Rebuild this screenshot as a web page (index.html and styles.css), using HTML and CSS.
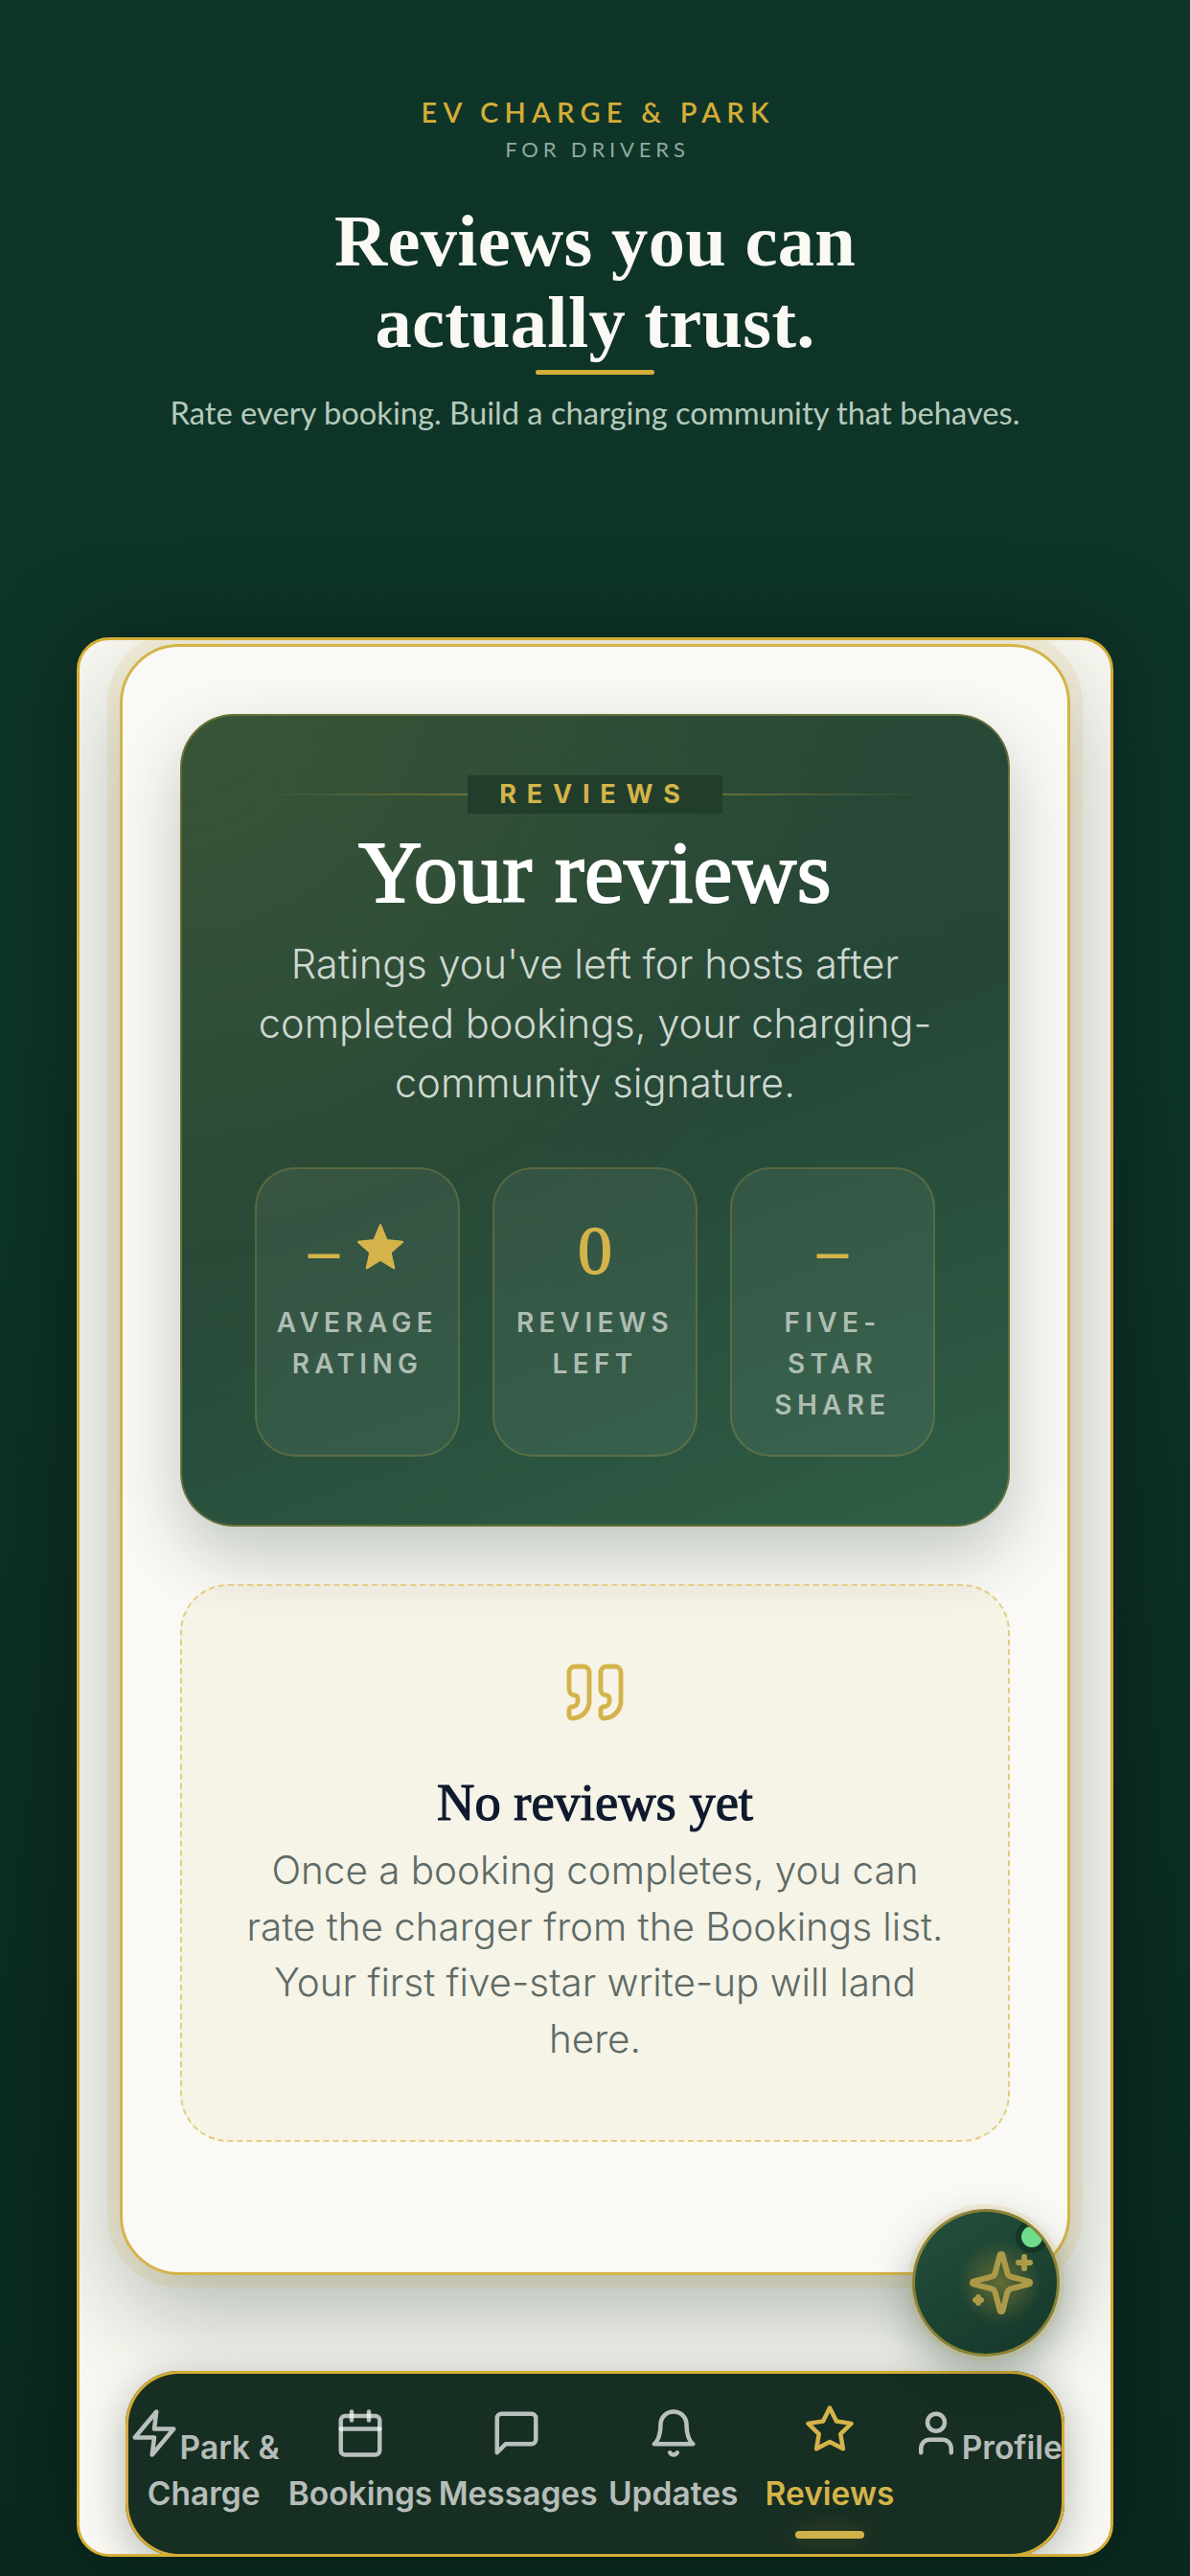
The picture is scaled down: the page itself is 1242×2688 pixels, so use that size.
FILE: index.html
```html
<!DOCTYPE html>
<html lang="en">
    <head>
        <meta charset="UTF-8" />
        <meta name="viewport" content="width=device-width, initial-scale=1.0" />
        <title>Reviews</title>
        <link rel="stylesheet" href="styles.css">
    </head>
    <body>
        <header class="intro">
            <div class="brand">EV CHARGE &amp; PARK</div>
            <div class="audience">FOR DRIVERS</div>
            <h1 class="headline">Reviews you can<br>actually trust.</h1>
            <div class="headline-rule"></div>
            <p class="tagline">Rate every booking. Build a charging community that behaves.</p>
        </header>
        <main class="phone">
            <section class="screen">
                <div class="hero">
                    <div class="eyebrow">
                        <span class="eyebrow-line"></span>
                        <span class="eyebrow-text">REVIEWS</span>
                        <span class="eyebrow-line flip"></span>
                    </div>
                    <h2 class="hero-title">Your reviews</h2>
                    <p class="hero-text">Ratings you've left for hosts after completed bookings, your charging-community signature.</p>
                    <div class="stats">
                        <div class="stat">
                            <div class="stat-value"><span class="stat-dash">–</span><svg class="stat-star" viewBox="0 0 24 24"><path d="M12 2.4l2.9 7 7.3.8-5.5 4.9 1.6 7.2-6.3-3.8-6.3 3.8 1.6-7.2-5.5-4.9 7.3-.8z" /></svg></div>
                            <div class="stat-label">AVERAGE RATING</div>
                        </div>
                        <div class="stat">
                            <div class="stat-value"><span class="stat-num">0</span></div>
                            <div class="stat-label">REVIEWS LEFT</div>
                        </div>
                        <div class="stat">
                            <div class="stat-value"><span class="stat-dash">–</span></div>
                            <div class="stat-label">FIVE-STAR SHARE</div>
                        </div>
                    </div>
                </div>
                <div class="empty">
                    <svg class="empty-icon" viewBox="0 0 24 24">
                        <path d="M16 3a2 2 0 0 0-2 2v6a2 2 0 0 0 2 2 1 1 0 0 1 1 1v1a2 2 0 0 1-2 2 1 1 0 0 0-1 1v2a1 1 0 0 0 1 1 6 6 0 0 0 6-6V5a2 2 0 0 0-2-2z" />
                        <path d="M5 3a2 2 0 0 0-2 2v6a2 2 0 0 0 2 2 1 1 0 0 1 1 1v1a2 2 0 0 1-2 2 1 1 0 0 0-1 1v2a1 1 0 0 0 1 1 6 6 0 0 0 6-6V5a2 2 0 0 0-2-2z" />
                    </svg>
                    <h3 class="empty-title">No reviews yet</h3>
                    <p class="empty-text">Once a booking completes, you can rate the charger from the Bookings list. Your first five-star write-up will land here.</p>
                </div>
            </section>
            <button class="fab">
                <svg class="fab-icon" viewBox="0 0 24 24">
                    <path d="M9.937 15.5A2 2 0 0 0 8.5 14.063l-6.135-1.582a.5.5 0 0 1 0-.962L8.5 9.936A2 2 0 0 0 9.937 8.5l1.582-6.135a.5.5 0 0 1 .963 0L14.063 8.5A2 2 0 0 0 15.5 9.937l6.135 1.581a.5.5 0 0 1 0 .964L15.5 14.063a2 2 0 0 0-1.437 1.437l-1.582 6.135a.5.5 0 0 1-.963 0z" />
                    <path d="M20 3v4" />
                    <path d="M22 5h-4" />
                    <path d="M4 17v2" />
                    <path d="M5 18H3" />
                </svg>
                <span class="fab-dot"></span>
            </button>
            <nav class="tabs">
                <a class="tab"><svg class="tab-icon" viewBox="0 0 24 24"><path d="M13 2 3 14h9l-1 8 10-12h-9l1-8z" /></svg>Park &amp; Charge</a>
                <a class="tab"><svg class="tab-icon" viewBox="0 0 24 24"><rect x="3" y="4" width="18" height="18" rx="2" /><path d="M16 2v4" /><path d="M8 2v4" /><path d="M3 10h18" /></svg>Bookings</a>
                <a class="tab"><svg class="tab-icon" viewBox="0 0 24 24"><path d="M21 15a2 2 0 0 1-2 2H7l-4 4V5a2 2 0 0 1 2-2h14a2 2 0 0 1 2 2z" /></svg>Messages</a>
                <a class="tab"><svg class="tab-icon" viewBox="0 0 24 24"><path d="M6 8a6 6 0 0 1 12 0c0 7 3 9 3 9H3s3-2 3-9" /><path d="M10.3 21a1.94 1.94 0 0 0 3.4 0" /></svg>Updates</a>
                <a class="tab active"><svg class="tab-icon" viewBox="0 0 24 24"><path d="M12 2l3.09 6.26L22 9.27l-5 4.87 1.18 6.88L12 17.77l-6.18 3.25L7 14.14 2 9.27l6.91-1.01L12 2z" /></svg>Reviews</a>
                <a class="tab"><svg class="tab-icon" viewBox="0 0 24 24"><path d="M19 21v-2a4 4 0 0 0-4-4H9a4 4 0 0 0-4 4v2" /><circle cx="12" cy="7" r="4" /></svg>Profile</a>
            </nav>
        </main>
    </body>
</html>
```
FILE: styles.css
```css
html {
    height: 100%;
    overflow: hidden;
}
body {
    margin: 0;
    height: 2688px;
    overflow: hidden;
    background: linear-gradient(180deg, #0f3529 0%, #0e3428 40%, #0b2c21 80%, #0a2a20 100%);
    font-family: "Inter", sans-serif;
}
.intro {
    height: 665px;
    box-sizing: border-box;
    padding-top: 100px;
    text-align: center;
    font-family: "Lato", sans-serif;
}
.brand {
    color: #d4ad37;
    font-size: 29px;
    font-weight: 600;
    letter-spacing: 0.215em;
    text-indent: 0.215em;
    line-height: 34px;
}
.audience {
    margin-top: 7px;
    color: #8faa9c;
    font-size: 22px;
    font-weight: 400;
    letter-spacing: 0.22em;
    text-indent: 0.22em;
    line-height: 30px;
}
.headline {
    margin: 38px 0 0;
    color: #fbf9f4;
    font-family: "Liberation Serif", serif;
    font-size: 76.5px;
    font-weight: 700;
    letter-spacing: 0.3px;
    line-height: 85px;
}
.headline-rule {
    width: 124px;
    height: 5px;
    margin: 7px auto 0;
    border-radius: 3px;
    background: #d4ad37;
}
.tagline {
    margin: 18px 0 0;
    color: #b6cabb;
    font-size: 32.7px;
    font-weight: 400;
    line-height: 44px;
}
.phone {
    position: relative;
    display: flex;
    flex-direction: column;
    align-items: center;
    width: 1082px;
    height: 2003px;
    box-sizing: border-box;
    margin: 0 auto;
    overflow: hidden;
    border: 3px solid #d4ad37;
    border-radius: 34px;
    background: #f8f7f1;
    box-shadow: 0 0 90px rgba(0, 0, 0, 0.35);
}
.screen {
    width: 992px;
    height: 1702px;
    box-sizing: border-box;
    flex-shrink: 0;
    margin-top: 4px;
    padding: 70px 60px 0;
    border: 3px solid #d4b44a;
    border-radius: 62px;
    background: #faf9f5;
    box-shadow: 0 0 0 13px rgba(212, 173, 55, 0.13), 0 40px 100px rgba(15, 45, 35, 0.3);
}
.hero {
    height: 848px;
    box-sizing: border-box;
    padding: 62px 76px 0;
    border: 2px solid rgba(212, 173, 55, 0.35);
    border-radius: 56px;
    background:
        radial-gradient(circle at 0 0, rgba(190, 180, 60, 0.1), transparent 60%),
        linear-gradient(160deg, #2a4a36 0%, #264737 50%, #2f5e46 100%);
    box-shadow: 0 30px 70px rgba(15, 40, 30, 0.24);
    text-align: center;
}
.eyebrow {
    display: flex;
    align-items: center;
    margin: 0 -76px;
    padding: 0 79px;
}
.eyebrow-line {
    flex: 1;
    height: 2px;
    background: linear-gradient(90deg, transparent, rgba(212, 173, 55, 0.35));
}
.eyebrow-line.flip {
    transform: scaleX(-1);
}
.eyebrow-text {
    width: 266px;
    height: 40px;
    background: #213d2c;
    color: #d4b44a;
    font-size: 27px;
    font-weight: 700;
    letter-spacing: 0.4em;
    line-height: 40px;
}
.hero-title {
    margin: 11px 0 0;
    color: #fff;
    font-family: "Liberation Serif", serif;
    font-size: 92px;
    font-weight: 400;
    letter-spacing: 0.4px;
    -webkit-text-stroke: 2px #fff;
    line-height: 100px;
}
.hero-text {
    margin: 15px 0 0;
    color: #cdd8d1;
    font-size: 41.6px;
    font-weight: 300;
    line-height: 62px;
}
.stats {
    display: grid;
    grid-template-columns: repeat(3, 1fr);
    gap: 34px;
    margin-top: 57px;
}
.stat {
    height: 302px;
    box-sizing: border-box;
    padding: 44px 20px 0;
    border: 2px solid rgba(212, 173, 55, 0.22);
    border-radius: 42px;
    background: rgba(255, 255, 255, 0.06);
}
.stat-value {
    display: flex;
    align-items: center;
    justify-content: center;
    gap: 16px;
    height: 72px;
    color: #d4b44a;
    font-family: "Liberation Serif", serif;
    line-height: 72px;
}
.stat-num {
    margin-top: 10px;
    font-size: 72px;
    -webkit-text-stroke: 1.4px #d4b44a;
}
.stat-dash {
    margin-top: 10px;
    font-size: 64px;
    font-weight: 700;
}
.stat-star {
    width: 54px;
    height: 54px;
    fill: #d4b44a;
    stroke: #d4b44a;
    stroke-width: 1;
    stroke-linejoin: round;
}
.stat-label {
    margin-top: 23px;
    color: #aebdb2;
    font-size: 28px;
    font-weight: 600;
    letter-spacing: 0.19em;
    line-height: 43px;
}
.empty {
    height: 582px;
    box-sizing: border-box;
    margin-top: 60px;
    padding: 75px 60px 0;
    border: 2px dashed #e3cd82;
    border-radius: 50px;
    background: rgba(205, 175, 60, 0.07);
    text-align: center;
}
.empty-icon {
    display: block;
    width: 72px;
    height: 72px;
    margin: 0 auto;
    fill: none;
    stroke: #d4b44a;
    stroke-width: 1.6;
    stroke-linecap: round;
    stroke-linejoin: round;
}
.empty-title {
    margin: 49px 0 0;
    color: #0f1a2e;
    font-family: "Liberation Serif", serif;
    font-size: 54.5px;
    font-weight: 400;
    -webkit-text-stroke: 1.2px #0f1a2e;
    line-height: 60px;
}
.empty-text {
    margin: 12px 0 0;
    color: #5e6b66;
    font-size: 40.4px;
    font-weight: 300;
    line-height: 58.5px;
}
.fab {
    position: absolute;
    right: 53px;
    bottom: 206px;
    display: flex;
    align-items: center;
    justify-content: center;
    width: 154px;
    height: 154px;
    padding: 0 0 0 32px;
    overflow: hidden;
    border: 3px solid rgba(212, 173, 55, 0.6);
    border-radius: 50%;
    background:
        radial-gradient(circle at 60% 50%, rgba(212, 173, 55, 0.38), transparent 38%),
        linear-gradient(150deg, #25503c, #15372a);
    box-shadow: 0 0 0 5px rgba(212, 173, 55, 0.14), 0 18px 45px rgba(15, 50, 35, 0.35);
}
.fab-icon {
    width: 72px;
    height: 72px;
    fill: none;
    stroke: #ab9a48;
    stroke-width: 2;
    stroke-linecap: round;
    stroke-linejoin: round;
}
.fab-dot {
    position: absolute;
    top: 15px;
    right: 15px;
    width: 22px;
    height: 22px;
    border-radius: 50%;
    background: #6fdc8c;
    box-shadow: 0 0 0 6px rgba(15, 45, 32, 0.6);
}
.tabs {
    display: flex;
    flex-shrink: 0;
    width: 980px;
    height: 194px;
    margin-top: auto;
    margin-bottom: -3px;
    padding-top: 38px;
    box-sizing: border-box;
    border-radius: 56px;
    background: #172e22;
    box-shadow: inset 0 0 0 3px #d4ad37, 0 10px 40px rgba(15, 40, 30, 0.3);
}
.tab {
    position: relative;
    flex: 1 1 0;
    min-width: 0;
    color: rgba(255, 255, 255, 0.7);
    font-size: 33.5px;
    font-weight: 600;
    line-height: 48px;
    text-align: center;
}
.tab.active {
    color: #d4b44a;
}
.tab.active::after {
    content: "";
    position: absolute;
    left: 50%;
    top: 129px;
    width: 72px;
    height: 8px;
    margin-left: -36px;
    border-radius: 4px;
    background: #d0b24a;
    box-shadow: 0 0 22px rgba(212, 173, 55, 0.3);
}
.tab-icon {
    width: 54px;
    height: 54px;
    fill: none;
    stroke: currentColor;
    stroke-width: 2;
    stroke-linecap: round;
    stroke-linejoin: round;
}
.tab.active .tab-icon {
    transform: translateY(-4px);
}
```
